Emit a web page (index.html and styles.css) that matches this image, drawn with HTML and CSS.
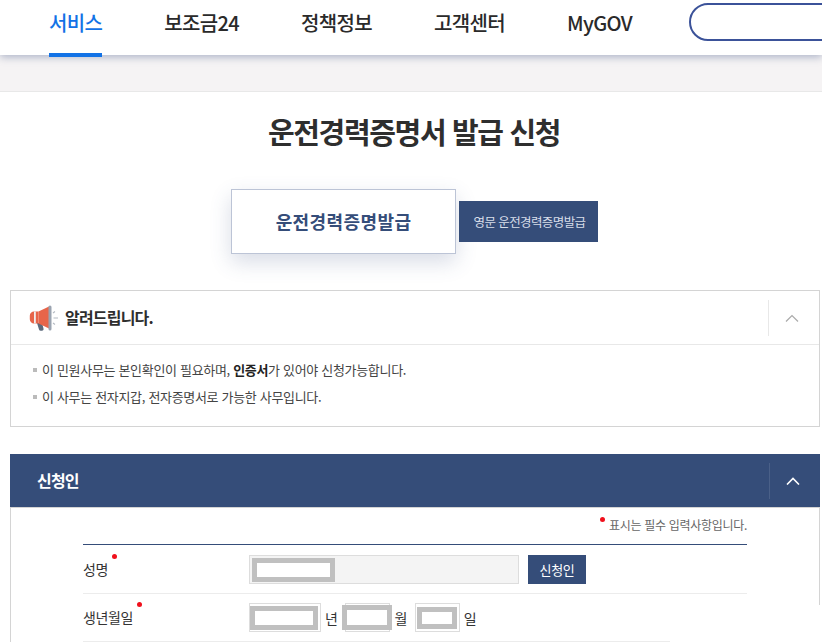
FILE: index.html
```html
<!DOCTYPE html>
<html lang="ko">
<head>
    <meta charset="UTF-8">
    <meta name="viewport" content="width=device-width, initial-scale=1.0">
    <title>운전경력증명서 발급 신청</title>
    <link rel="stylesheet" href="styles.css">
</head>
<body>
    <header class="top">
        <nav class="gnb">
            <a class="gnb-item active">서비스</a>
            <a class="gnb-item">보조금24</a>
            <a class="gnb-item">정책정보</a>
            <a class="gnb-item">고객센터</a>
            <a class="gnb-item">MyGOV</a>
        </nav>
        <div class="search-clip">
            <div class="search"></div>
        </div>
    </header>
    <div class="band"></div>

    <main class="content">
        <h1 class="page-title">운전경력증명서 발급 신청</h1>

        <div class="tabs">
            <a class="tab-main">운전경력증명발급</a>
            <a class="tab-sub">영문 운전경력증명발급</a>
        </div>

        <section class="notice">
            <div class="notice-head">
                <svg class="notice-icon" width="29" height="26" viewBox="0 0 29 26">
                    <path d="M8 18h5l1.500 5.500a1.800 1.800 0 0 1-1.300 2.300h-1.400a1.800 1.800 0 0 1-1.800-1.300z" fill="#5d6b7d"/>
                    <path d="M5 6.500h4.500v12H5a4.200 4.200 0 0 1-4.200-4.200v-3.600A4.200 4.200 0 0 1 5 6.500z" fill="#e7654a"/>
                    <rect x="5" y="6.500" width="1.800" height="12" fill="#f0eeee"/>
                    <path d="M9.500 6.500L20 1.500v22l-10.500-5z" fill="#e7654a"/>
                    <rect x="19.500" y="0.500" width="3" height="25" rx="1.500" fill="#9aa3b0"/>
                    <path d="M24 8l2-1.500M24.500 13H29M24 18l2 1.500" stroke="#b4bac2" stroke-width="1.100" fill="none"/>
                </svg>
                <h2 class="notice-title">알려드립니다.</h2>
                <button class="fold">
                    <svg width="14" height="8" viewBox="0 0 14 8"><path d="M1 7.500l6-6 6 6" fill="none" stroke="#aaa" stroke-width="1.200"/></svg>
                </button>
            </div>
            <ul class="notice-list">
                <li>이 민원사무는 본인확인이 필요하며, <b>인증서</b>가 있어야 신청가능합니다.</li>
                <li>이 사무는 전자지갑, 전자증명서로 가능한 사무입니다.</li>
            </ul>
        </section>

        <section class="panel">
            <div class="panel-head">
                <h2 class="panel-title">신청인</h2>
                <button class="fold fold-dark">
                    <svg width="14" height="8" viewBox="0 0 14 8"><path d="M1 7.500l6-6 6 6" fill="none" stroke="#fff" stroke-width="1.600"/></svg>
                </button>
            </div>
            <div class="panel-body">
                <p class="req-note"><i class="dot"></i>표시는 필수 입력사항입니다.</p>
                <div class="form">
                    <div class="form-row">
                        <div class="label">성명<i class="dot"></i></div>
                        <div class="field">
                            <span class="input input-name"><span class="mask mask-name"></span></span>
                            <button class="btn-small">신청인</button>
                        </div>
                    </div>
                    <div class="form-row">
                        <div class="label">생년월일<i class="dot"></i></div>
                        <div class="field field-date">
                            <span class="input input-year"><span class="mask mask-year"></span></span>
                            <span class="unit">년</span>
                            <span class="input input-day"><span class="mask mask-month"></span></span>
                            <span class="unit">월</span>
                            <span class="input input-day"><span class="mask mask-day"></span></span>
                            <span class="unit">일</span>
                        </div>
                    </div>
                </div>
            </div>
        </section>
    </main>
    <div class="cut"></div>
</body>
</html>
```

FILE: styles.css
```css
* {
    margin: 0;
    padding: 0;
    box-sizing: border-box;
}

html, body {
    height: 100%;
    overflow: hidden;
}

body {
    position: relative;
    font-family: "Noto Sans CJK KR", "Noto Sans", sans-serif;
    color: #333;
    background: #fff;
}

button {
    font-family: inherit;
    border: 0;
    background: none;
}

/* top nav */
.top {
    position: relative;
    height: 55px;
    display: flex;
    background: #fff;
    box-shadow: 0 2px 8px rgba(60, 80, 130, 0.4);
}

.gnb {
    display: flex;
    flex: none;
    padding-left: 49px;
    gap: 62px;
}

.gnb-item {
    height: 57px;
    padding-top: 5px;
    font-size: 20px;
    font-weight: 500;
    letter-spacing: -0.65px;
    line-height: 36px;
    white-space: nowrap;
    color: #2a2a2a;
    border-bottom: 4px solid transparent;
}

.gnb-item.active {
    color: #1272e6;
    border-bottom-color: #1272e6;
}

.search-clip {
    flex: 1;
    min-width: 0;
    height: 45px;
    margin-left: 57px;
    padding-top: 3px;
    overflow: hidden;
}

.search {
    width: 200px;
    height: 38px;
    border: 2px solid #3b5299;
    border-radius: 20px;
}

.band {
    height: 37px;
    background: #f5f3f4;
    border-bottom: 1px solid #e8e8e8;
}

.content {
    padding: 0 2px 0 10px;
}

.page-title {
    margin-top: 18px;
    padding-right: 2px;
    font-size: 29px;
    font-weight: 700;
    line-height: 42px;
    letter-spacing: -1.350px;
    text-align: center;
    color: #2e2e2e;
}

/* tabs */
.tabs {
    display: flex;
    align-items: center;
    gap: 3px;
    margin: 37px 0 36px 221px;
}

.tab-main {
    width: 225px;
    height: 65px;
    font-size: 18px;
    font-weight: 700;
    line-height: 63px;
    letter-spacing: 0.400px;
    text-align: center;
    color: #354d79;
    background: #fff;
    border: 1px solid #bcc4d6;
    box-shadow: 0 8px 20px rgba(60, 80, 130, 0.2);
}

.tab-sub {
    width: 139px;
    height: 41px;
    padding-left: 2px;
    font-size: 12.500px;
    line-height: 41px;
    letter-spacing: -0.600px;
    text-align: center;
    color: #d8dee9;
    background: #354d79;
}

/* notice box */
.notice {
    height: 137px;
    border: 1px solid #d4d4d4;
}

.notice-head {
    display: flex;
    align-items: center;
    height: 54px;
    padding-left: 18px;
    border-bottom: 1px solid #e8e8e8;
}

.notice-title {
    margin: 0 0 2px 7px;
    font-size: 16px;
    font-weight: 700;
    letter-spacing: -0.8px;
    color: #2e2e2e;
}

.fold {
    display: flex;
    align-items: center;
    justify-content: center;
    width: 51px;
    height: 36px;
    padding-right: 5px;
    margin-left: auto;
    border-left: 1px solid #e8e8e8;
}

.notice-list {
    list-style: none;
    padding: 11px 0 0 22px;
}

.notice-list li {
    position: relative;
    padding-left: 9px;
    font-size: 13px;
    line-height: 27px;
    letter-spacing: -0.320px;
    color: #444;
}

.notice-list li::before {
    content: "";
    position: absolute;
    left: 0;
    top: 12px;
    width: 4px;
    height: 4px;
    background: #bbb;
}

.notice-list b {
    font-weight: 700;
    color: #222;
}

/* applicant panel */
.panel {
    margin-top: 27px;
}

.panel-head {
    display: flex;
    align-items: center;
    height: 53px;
    padding-left: 27px;
    background: #354d79;
}

.panel-title {
    margin-bottom: 2px;
    font-size: 16px;
    font-weight: 700;
    letter-spacing: -0.8px;
    color: #fff;
}

.fold-dark {
    width: 51px;
    border-left-color: #4a6088;
}

.panel-body {
    height: 160px;
    padding: 0 72px;
    border: 1px solid #d4d4d4;
}

.req-note {
    display: flex;
    justify-content: flex-end;
    padding-top: 5px;
    height: 36px;
    font-size: 12px;
    line-height: 24px;
    letter-spacing: -0.3px;
    color: #666;
}

.dot {
    display: block;
    width: 5px;
    height: 5px;
    border-radius: 50%;
    background: #f0101c;
}

.req-note .dot {
    margin: 4px 4px 0 0;
}

.form {
    padding-top: 1px;
    border-top: 1px solid #354d79;
}

.form-row {
    display: flex;
    height: 48px;
    border-bottom: 1px solid #ececec;
}

.label {
    display: flex;
    width: 166px;
    font-size: 14px;
    line-height: 46px;
    letter-spacing: -0.4px;
    color: #333;
}

.label .dot {
    margin: 8px 0 0 4px;
}

.field {
    display: flex;
    align-items: center;
    gap: 9px;
}

.field-date {
    gap: 0;
}

.unit {
    margin: 0 8px 0 4px;
    font-size: 14px;
    letter-spacing: -0.5px;
    color: #333;
}

.input {
    display: flex;
    align-items: center;
    height: 29px;
    background: #f4f4f4;
    border: 1px solid #ddd;
}

.input-name {
    width: 270px;
    padding-left: 2px;
}

.input-year {
    width: 72px;
    background: #fff;
}

.input-day {
    width: 45px;
    background: #fff;
}

/* blanked-out values */
.mask {
    display: block;
    flex: none;
    background: #fff;
    border: 5px solid #c0c0c0;
}

.mask-name {
    width: 83px;
    height: 24px;
}

.mask-year {
    width: 68px;
    height: 24px;
}

.mask-month {
    width: 50px;
    height: 25px;
    margin-left: -4px;
}

.mask-day {
    width: 40px;
    height: 22px;
    margin-left: 1px;
}

.btn-small {
    width: 58px;
    height: 29px;
    font-size: 13px;
    letter-spacing: -0.3px;
    color: #fff;
    background: #354d79;
}

/* screenshot ends short at the lower right */
.cut {
    position: absolute;
    left: 670px;
    top: 605px;
    right: 0;
    bottom: 0;
    background: #fff;
}
```
